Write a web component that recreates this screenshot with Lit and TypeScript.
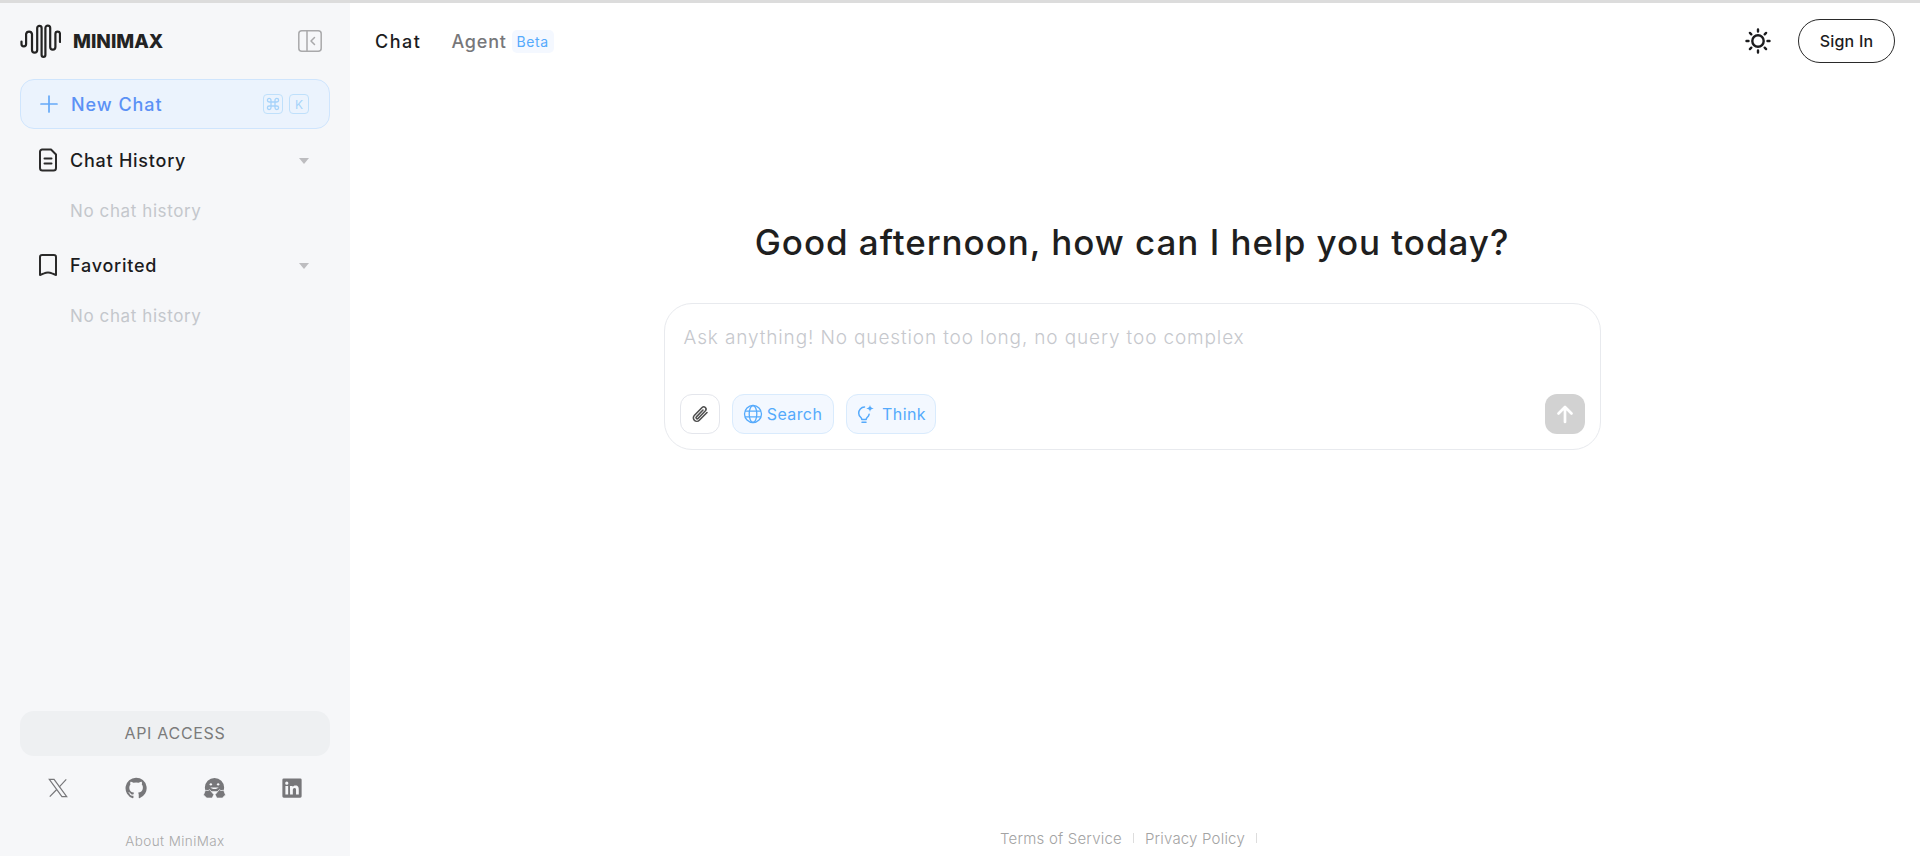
import { LitElement, html, css } from "lit";
import { customElement } from "lit/decorators.js";

const logo = html`<svg class="logo" viewBox="0 0 41 34" fill="none" stroke="#232323" stroke-width="2.2" stroke-linecap="round" stroke-linejoin="round"><path d="M1.5 17.5v2.5a2.3 2.3 0 0 0 4.6 0V10a3 3 0 0 1 5.9 0v16a2.6 2.6 0 0 0 5.2 0V4a2.2 2.2 0 0 1 4.4 0v27a1.9 1.9 0 0 0 3.8 0 V4a2.4 2.4 0 0 1 4.8 0v19a2.6 2.6 0 0 0 5.2 0V10a2.3 2.3 0 0 1 4.6 0v8" /></svg>`;

@customElement("app-root")
export class AppRoot extends LitElement {
  static styles = css`
    :host {
      display: flex;
      flex-direction: column;
      height: 856px;
      overflow: hidden;
      font-family: Inter, "Noto Sans", sans-serif;
      color: #1c1c1e;
      background: #fff;
    }
    * { box-sizing: border-box; }
    svg { display: block; flex: none; }
    .strip { height: 3px; background: #dcdcdc; flex: none; }
    .page { flex: 1; display: flex; min-height: 0; }

    .side {
      width: 350px;
      flex: none;
      background: #f6f7f9;
      padding: 20px 20px 5px;
      display: flex;
      flex-direction: column;
    }
    .brand { display: flex; align-items: center; height: 36px; }
    .logo { width: 41px; height: 34px; }
    .wordmark { margin-left: 12px; font-size: 19px; font-weight: 800; letter-spacing: 0; color: #232323; }
    .collapse { margin-left: auto; margin-right: 8px; width: 24px; height: 22px; }
    .new {
      margin-top: 20px;
      height: 50px;
      border: 1px solid #cfe5fd;
      border-radius: 14px;
      background: #ebf3fd;
      display: flex;
      align-items: center;
      padding: 0 20px 0 19px;
      color: #5b91f5;
      font-size: 18px;
      font-weight: 500;
      letter-spacing: 0.95px;
    }
    .new .plus { width: 18px; height: 18px; margin-right: 13px; }
    .kbds { margin-left: auto; display: flex; gap: 6px; }
    .kbd {
      width: 20px; height: 20px;
      border: 1px solid #bfe0fb;
      border-radius: 4px;
      color: #a6d3fa;
      font-size: 12px;
      font-weight: 400;
      letter-spacing: 0;
      display: flex; align-items: center; justify-content: center;
    }
    .kbd svg { width: 14px; height: 14px; }
    .group { display: flex; align-items: center; height: 24px; margin: 19px 0 0 18px; font-size: 18px; font-weight: 500; letter-spacing: 0.75px; }
    .group svg.ic { width: 20px; height: 24px; margin-right: 12px; }
    .caret { margin-left: auto; margin-right: 21px; margin-top: 2px; width: 0; height: 0; border-left: 5px solid transparent; border-right: 5px solid transparent; border-top: 6px solid #bdbdc0; }
    .empty { margin: 27px 0 0 50px; height: 24px; line-height: 24px; font-size: 17px; letter-spacing: 0.6px; color: #c4c7cc; }
    .empty + .group { margin-top: 30px; }
    .spacer { flex: 1; }
    .api {
      height: 45px;
      padding-bottom: 2px;
      border-radius: 14px;
      background: #eef0f2;
      display: flex; align-items: center; justify-content: center;
      color: #7b7b7b;
      font-size: 16px;
      letter-spacing: 0.7px;
    }
    .social { display: flex; justify-content: space-between; padding: 21px 27px 0 27px; height: 65px; }
    .social svg { width: 22px; height: 22px; }
    .social svg.hf { width: 25px; margin: 0 -1.5px; }
    .about { text-align: center; font-size: 13.5px; font-weight: 300; letter-spacing: 0.4px; color: #a9a9a9; height: 20px; line-height: 20px; margin-top: 10px; }

    .main { flex: 1; display: flex; flex-direction: column; min-width: 0; }
    .top { display: flex; align-items: center; height: 76px; padding: 0 25px; flex: none; }
    .tab { font-size: 18px; font-weight: 500; letter-spacing: 1.5px; }
    .tab.off { margin-left: 30px; color: #77777a; letter-spacing: 0.8px; }
    .beta { margin-left: 5px; width: 42px; height: 23px; border-radius: 5px; background: #f4f8ff; color: #55aafc; font-size: 14px; letter-spacing: 0.6px; display: flex; align-items: center; justify-content: center; }
    .sun { margin-left: auto; width: 26px; height: 26px; margin-right: 27px; }
    .signin { width: 97px; height: 44px; border: 1px solid #2a2a2a; border-radius: 22px; display: flex; align-items: center; justify-content: center; font-size: 16px; font-weight: 500; letter-spacing: 0.2px; }

    .center { flex: 1; display: flex; flex-direction: column; align-items: center; padding: 141px 6px 0 0; }
    h1 { margin: 0; font-size: 35px; line-height: 44px; font-weight: 500; color: #1f1f1f; letter-spacing: 0.95px; white-space: nowrap; }
    .box {
      margin-top: 39px;
      width: 937px;
      height: 147px;
      border: 1px solid #e8eaee;
      border-radius: 28px;
      padding: 21px 15px 15px;
      display: flex;
      flex-direction: column;
    }
    .ph { padding-left: 4px; height: 26px; line-height: 26px; font-size: 19px; font-weight: 300; letter-spacing: 0.87px; color: #c6c8cd; }
    .tools { margin-top: auto; display: flex; align-items: center; gap: 12px; }
    .tool { height: 40px; border-radius: 12px; border: 1px solid #d9ebfd; background: #f3f8ff; color: #55aafc; display: flex; align-items: center; justify-content: center; gap: 4px; font-size: 16px; letter-spacing: 0.4px; }
    .tool.clip { width: 40px; background: #fff; border-color: #e4e6ec; }
    .tool.s { width: 102px; }
    .tool.t { width: 90px; gap: 7px; }
    .tool svg { width: 20px; height: 20px; }
    .send { margin-left: auto; width: 40px; height: 40px; border-radius: 12px; background: #d2d2d2; display: flex; align-items: center; justify-content: center; }
    .send svg { width: 20px; height: 20px; }
    .foot { height: 36px; flex: none; padding-right: 13px; display: flex; align-items: center; justify-content: center; gap: 11px; font-size: 15px; font-weight: 300; letter-spacing: 0.2px; color: #a3a3a3; }
    .foot i { display: block; width: 1px; height: 10px; background: #ddd; }
  `;

  render() {
    return html`
      <div class="strip"></div>
      <div class="page">
        <aside class="side">
          <div class="brand">
            ${logo}
            <span class="wordmark">MINIMAX</span>
            <svg class="collapse" viewBox="0 0 24 22" fill="none" stroke="#a9a9ab" stroke-width="1.5" stroke-linecap="round" stroke-linejoin="round"><rect x=".8" y=".8" width="22.4" height="20.4" rx="3"/><path d="M9 1v20M16.5 7.5 13 11l3.5 3.5"/></svg>
          </div>
          <div class="new">
            <svg class="plus" viewBox="0 0 18 18" stroke="#65a9f8" stroke-width="1.7" stroke-linecap="round"><path d="M9 1v16M1 9h16"/></svg>
            <span>New Chat</span>
            <span class="kbds">
              <span class="kbd"><svg viewBox="0 0 14 14" fill="none" stroke="#a6d3fa" stroke-width="1.3"><path d="M5 5h4v4H5ZM5 5V3.200A1.800 1.800 0 1 0 3.200 5H5M9 5V3.200A1.800 1.800 0 1 1 10.800 5H9M5 9v1.800A1.800 1.800 0 1 1 3.200 9H5M9 9v1.800A1.800 1.800 0 1 0 10.800 9H9"/></svg></span>
              <span class="kbd">K</span>
            </span>
          </div>
          <div class="group">
            <svg class="ic" viewBox="0 0 20 24" fill="none" stroke="#2b2b2b" stroke-width="2" stroke-linejoin="round" stroke-linecap="round"><path d="M4 1.500h9l5 5V20a2.500 2.500 0 0 1-2.500 2.500h-11A2.500 2.500 0 0 1 2 20V4a2.500 2.500 0 0 1 2-2.500Z"/><path d="M6.500 10.500h7M6.500 15.500h7"/></svg>
            <span>Chat History</span><span class="caret"></span>
          </div>
          <div class="empty">No chat history</div>
          <div class="group">
            <svg class="ic" viewBox="0 0 20 24" fill="none" stroke="#2b2b2b" stroke-width="2" stroke-linejoin="round" stroke-linecap="round"><path d="M4 2h12a2 2 0 0 1 2 2v18l-4-1.600a10 10 0 0 0-8 0L2 22V4a2 2 0 0 1 2-2Z"/></svg>
            <span>Favorited</span><span class="caret"></span>
          </div>
          <div class="empty">No chat history</div>
          <div class="spacer"></div>
          <div class="api">API ACCESS</div>
          <div class="social">
            <svg viewBox="0 0 24 24" fill="none" stroke="#77777a" stroke-width="1.300"><path d="M2.500 2.500h5.200l13.800 19h-5.200Z"/><path d="M21 2.500 13.200 11M10.600 13.600 3 21.500"/></svg>
            <svg viewBox="0 0 24 24" fill="#77777a"><path d="M12 .7a11.500 11.500 0 0 0-3.600 22.400c.6.100.8-.3.8-.6v-2.100c-3.200.7-3.900-1.500-3.900-1.500-.5-1.300-1.300-1.700-1.300-1.700-1-.7.1-.7.1-.7 1.200.1 1.800 1.200 1.800 1.200 1 1.800 2.700 1.300 3.400 1 .1-.8.4-1.300.7-1.600-2.600-.3-5.300-1.300-5.300-5.700 0-1.300.5-2.300 1.200-3.100-.1-.3-.5-1.500.1-3.100 0 0 1-.3 3.200 1.200a11 11 0 0 1 5.800 0c2.200-1.500 3.200-1.200 3.200-1.200.6 1.600.2 2.800.1 3.100.7.800 1.200 1.800 1.200 3.100 0 4.400-2.700 5.400-5.300 5.700.4.400.8 1.100.8 2.200v3.200c0 .3.200.7.8.6A11.500 11.500 0 0 0 12 .7Z"/></svg>
            <svg class="hf" viewBox="0 0 25 24"><path fill="#77777a" d="M12.500 1a10.500 10.500 0 0 0-10.500 10.500c0 1.500.3 2.800.9 4h19.200c.6-1.200.9-2.500.9-4A10.500 10.500 0 0 0 12.500 1Z"/><circle cx="8.500" cy="8" r="1.300" fill="#f6f7f9"/><circle cx="16.500" cy="8" r="1.300" fill="#f6f7f9"/><path d="M8 11.200c1.200 2.600 7.800 2.600 9 0-1.200.5-7.800.5-9 0Z" fill="#f6f7f9"/><path fill="#77777a" stroke="#f6f7f9" stroke-width=".8" d="M.5 19.500 2.500 14.500l3 .3 1.800-1 4.500 5.400-1.800 3.800H4Z"/><path fill="#77777a" stroke="#f6f7f9" stroke-width=".8" d="M24.500 19.500 22.500 14.500l-3 .3-1.800-1-4.500 5.400 1.800 3.800H21Z"/></svg>
            <svg viewBox="0 0 24 24"><path fill="#77777a" d="M3 1.500h18A1.500 1.500 0 0 1 22.500 3v18a1.500 1.500 0 0 1-1.500 1.500H3A1.500 1.500 0 0 1 1.500 21V3A1.500 1.500 0 0 1 3 1.500Z"/><path fill="#f6f7f9" d="M4.800 9.700h3v9.500h-3ZM6.300 5a1.700 1.700 0 1 1 0 3.500 1.700 1.700 0 0 1 0-3.500ZM9.800 9.700h2.900V11c.5-.9 1.600-1.600 3.100-1.600 3 0 3.600 2 3.600 4.600v5.200h-3v-4.600c0-1.100 0-2.600-1.600-2.600s-1.900 1.200-1.900 2.500v4.700h-3Z"/></svg>
          </div>
          <div class="about">About MiniMax</div>
        </aside>
        <main class="main">
          <div class="top">
            <span class="tab">Chat</span>
            <span class="tab off">Agent</span>
            <span class="beta">Beta</span>
            <svg class="sun" viewBox="0 0 26 26" fill="none" stroke="#1c1c1e" stroke-width="2.400" stroke-linecap="round"><circle cx="13" cy="13" r="5.700"/><path d="M13 1.500v2M13 22.500v2M1.500 13h2M22.500 13h2M4.900 4.900l1.400 1.400M19.700 19.700l1.400 1.400M4.900 21.100l1.400-1.400M19.700 6.300l1.400-1.400"/></svg>
            <span class="signin">Sign In</span>
          </div>
          <div class="center">
            <h1>Good afternoon, how can I help you today?</h1>
            <div class="box">
              <div class="ph">Ask anything! No question too long, no query too complex</div>
              <div class="tools">
                <span class="tool clip"><svg viewBox="0 0 20 20" fill="none" stroke="#4f4f4f" stroke-width="1.600" stroke-linecap="round"><path d="M17 8.500 9.300 16.200a3.400 3.400 0 0 1-5-4.700l7.800-8a2.300 2.300 0 0 1 3.300 3.200L8 14.500a1.100 1.100 0 0 1-1.600-1.600L13 6"/></svg></span>
                <span class="tool s"><svg viewBox="0 0 20 20" fill="none" stroke="#55aafc" stroke-width="1.300"><circle cx="10" cy="10" r="8.500"/><ellipse cx="10" cy="10" rx="3.800" ry="8.500"/><path d="M2 7.200h16M2 12.800h16"/></svg>Search</span>
                <span class="tool t"><svg viewBox="0 0 20 20" fill="none" stroke="#55aafc" stroke-width="1.500" stroke-linecap="round" stroke-linejoin="round"><path d="M9.500 3a6 6 0 0 0-5.800 6.200c0 2 1 3.200 2.200 4.300.6.600.9 1 .9 1.900h4.400c0-.9.300-1.300.9-1.900 1-.9 1.700-1.900 2-3.200M7 18.300h4"/><path fill="#55aafc" stroke="none" d="M15 .8c.3 2.300 1.200 3.200 3.800 3.600-2.600.4-3.500 1.300-3.800 3.600-.3-2.300-1.200-3.200-3.800-3.600 2.600-.4 3.500-1.300 3.800-3.600Z"/></svg>Think</span>
                <span class="send"><svg viewBox="0 0 20 20" fill="none" stroke="#fff" stroke-width="2.700" stroke-linecap="round" stroke-linejoin="round"><path d="M10 18V3M3.500 9.500 10 3l6.500 6.500"/></svg></span>
              </div>
            </div>
          </div>
          <div class="foot"><span>Terms of Service</span><i></i><span>Privacy Policy</span><i></i></div>
        </main>
      </div>
    `;
  }
}
